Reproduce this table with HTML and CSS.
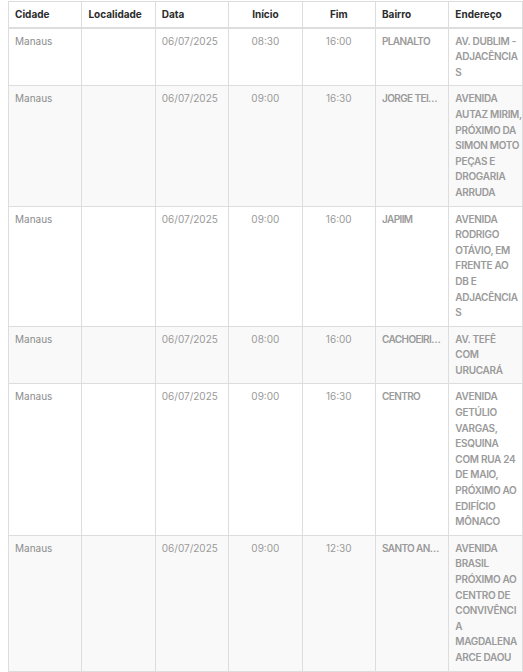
FILE: index.html
```html
<!DOCTYPE html>
<html lang="pt-BR">
<head>
<meta charset="utf-8">
<title>Agenda</title>
<link rel="stylesheet" href="styles.css">
</head>
<body>
<table class="agenda">
  <colgroup>
    <col class="c"><col class="c"><col class="c"><col class="c"><col class="c"><col class="c"><col class="c">
  </colgroup>
  <thead>
    <tr>
      <th>Cidade</th>
      <th>Localidade</th>
      <th>Data</th>
      <th class="mid">Início</th>
      <th class="mid">Fim</th>
      <th>Bairro</th>
      <th>Endereço</th>
    </tr>
  </thead>
  <tbody>
    <tr>
      <td>Manaus</td><td></td><td class="num">06/07/2025</td><td class="mid num">08:30</td><td class="mid num">16:00</td>
      <td class="bairro"><div class="clip">PLANALTO</div></td>
      <td class="end"><span>AV. DUBLIM -</span><span>ADJACÊNCIA</span><span>S</span></td>
    </tr>
    <tr>
      <td>Manaus</td><td></td><td class="num">06/07/2025</td><td class="mid num">09:00</td><td class="mid num">16:30</td>
      <td class="bairro"><div class="clip">JORGE TEIXEIRA</div></td>
      <td class="end"><span>AVENIDA</span><span>AUTAZ MIRIM,</span><span>PRÓXIMO DA</span><span>SIMON MOTO</span><span>PEÇAS E</span><span>DROGARIA</span><span>ARRUDA</span></td>
    </tr>
    <tr>
      <td>Manaus</td><td></td><td class="num">06/07/2025</td><td class="mid num">09:00</td><td class="mid num">16:00</td>
      <td class="bairro"><div class="clip">JAPIIM</div></td>
      <td class="end"><span>AVENIDA</span><span>RODRIGO</span><span>OTÁVIO, EM</span><span>FRENTE AO</span><span>DB E</span><span>ADJACÊNCIA</span><span>S</span></td>
    </tr>
    <tr>
      <td>Manaus</td><td></td><td class="num">06/07/2025</td><td class="mid num">08:00</td><td class="mid num">16:00</td>
      <td class="bairro"><div class="clip">CACHOEIRINHA</div></td>
      <td class="end"><span>AV. TEFÊ</span><span>COM</span><span>URUCARÁ</span></td>
    </tr>
    <tr>
      <td>Manaus</td><td></td><td class="num">06/07/2025</td><td class="mid num">09:00</td><td class="mid num">16:30</td>
      <td class="bairro"><div class="clip">CENTRO</div></td>
      <td class="end"><span>AVENIDA</span><span>GETÚLIO</span><span>VARGAS,</span><span>ESQUINA</span><span>COM RUA 24</span><span>DE MAIO,</span><span>PRÓXIMO AO</span><span>EDIFÍCIO</span><span>MÔNACO</span></td>
    </tr>
    <tr>
      <td>Manaus</td><td></td><td class="num">06/07/2025</td><td class="mid num">09:00</td><td class="mid num">12:30</td>
      <td class="bairro"><div class="clip">SANTO ANTÔNIO</div></td>
      <td class="end"><span>AVENIDA</span><span>BRASIL</span><span>PRÓXIMO AO</span><span>CENTRO DE</span><span>CONVIVÊNCI</span><span>A</span><span>MAGDALENA</span><span>ARCE DAOU</span></td>
    </tr>
  </tbody>
</table>
</body>
</html>
```
FILE: styles.css
```css
html, body {
  margin: 0;
  padding: 0;
  background: #ffffff;
}
body {
  padding: 1px 0 0 8px;
  font-family: "Inter", "Noto Sans", sans-serif;
}
.agenda {
  border-collapse: collapse;
  table-layout: fixed;
  width: 514px;
  font-size: 10px;
  line-height: 15.6px;
  color: #8c8c8c;
}
.agenda col.c {
  width: 73.4px;
}
.agenda th,
.agenda td {
  border: 1px solid #dddddd;
  padding: 5px 6px;
  text-align: left;
  vertical-align: top;
}
.agenda th {
  color: #2b2b2b;
  font-weight: 700;
  padding: 5px 6px 4px;
  border-bottom-width: 2px;
  background: #ffffff;
}
.agenda tbody tr:nth-child(even) td {
  background: #f9f9f9;
}
.agenda td.num {
  color: #999999;
}
.agenda .mid {
  text-align: center;
}
.agenda .bairro,
.agenda .end {
  font-weight: 600;
  color: #9a9a9a;
  letter-spacing: -0.3px;
}
.agenda .bairro {
  padding-right: 6px;
  letter-spacing: -0.6px;
}
.clip {
  white-space: nowrap;
  overflow: hidden;
  text-overflow: ellipsis;
}
.end span {
  display: block;
  white-space: nowrap;
}
```
